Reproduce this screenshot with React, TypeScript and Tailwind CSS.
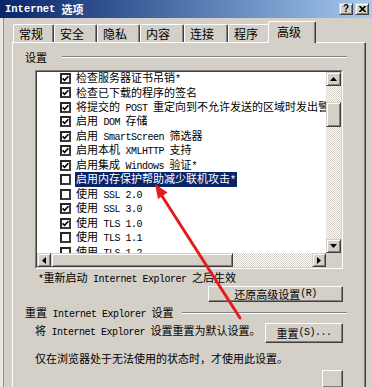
import React from "react";

function Txt({ s }: { s: string }) {
  const parts = s.match(/[\x00-\x7F]+|[^\x00-\x7F]+/g) || [];
  return (
    <>
      {parts.map((p, i) =>
        /^[\x00-\x7F]+$/.test(p) ? (
          <span
            key={i}
            className="font-['Liberation_Mono',monospace] text-[10px] tracking-[-0.5px] whitespace-pre"
          >
            {p}
          </span>
        ) : (
          <span key={i}>{p}</span>
        )
      )}
    </>
  );
}

function Arrow({ dir }: { dir: "up" | "down" | "left" | "right" }) {
  if (dir === "up")
    return (
      <svg width="7" height="4" viewBox="0 0 7 4">
        <polygon points="0,4 7,4 3.5,0" fill="#000" />
      </svg>
    );
  if (dir === "down")
    return (
      <svg width="7" height="4" viewBox="0 0 7 4">
        <polygon points="0,0 7,0 3.5,4" fill="#000" />
      </svg>
    );
  if (dir === "left")
    return (
      <svg width="4" height="7" viewBox="0 0 4 7">
        <polygon points="4,0 4,7 0,3.5" fill="#000" />
      </svg>
    );
  return (
    <svg width="4" height="7" viewBox="0 0 4 7">
      <polygon points="0,0 0,7 4,3.5" fill="#000" />
    </svg>
  );
}

const raised =
  "bg-[#d4d0c8] border border-t-[#d4d0c8] border-l-[#d4d0c8] border-r-[#404040] border-b-[#404040] shadow-[inset_1px_1px_0_#ffffff,inset_-1px_-1px_0_#808080]";

const btn =
  "bg-[#d4d0c8] border border-t-white border-l-white border-r-[#404040] border-b-[#404040] shadow-[inset_-1px_-1px_0_#808080]";

function CheckBox({ checked }: { checked: boolean }) {
  return (
    <div className="w-[11px] h-[11px] shrink-0 bg-white border-2 border-t-[#262626] border-l-[#262626] border-r-[#3a3a3a] border-b-[#3a3a3a] flex items-center justify-center">
      {checked && (
        <svg width="7" height="7" viewBox="0 0 7 7">
          <path d="M0.6 3.4 L2.6 5.4 L6.4 1.2" stroke="#000" strokeWidth="1.6" fill="none" />
        </svg>
      )}
    </div>
  );
}

const rows: { c: boolean; t: string; sel?: boolean }[] = [
  { c: true, t: "检查服务器证书吊销*" },
  { c: true, t: "检查已下载的程序的签名" },
  { c: true, t: "将提交的 POST 重定向到不允许发送的区域时发出警告" },
  { c: true, t: "启用 DOM 存储" },
  { c: true, t: "启用 SmartScreen 筛选器" },
  { c: true, t: "启用本机 XMLHTTP 支持" },
  { c: true, t: "启用集成 Windows 验证*" },
  { c: false, t: "启用内存保护帮助减少联机攻击*", sel: true },
  { c: false, t: "使用 SSL 2.0" },
  { c: true, t: "使用 SSL 3.0" },
  { c: true, t: "使用 TLS 1.0" },
  { c: false, t: "使用 TLS 1.1" },
  { c: false, t: "使用 TLS 1.2" },
];

const tabs = [
  { t: "常规", w: "w-[41px]" },
  { t: "安全", w: "w-[43px]" },
  { t: "隐私", w: "w-[43px]" },
  { t: "内容", w: "w-[44px]" },
  { t: "连接", w: "w-[44px]" },
  { t: "程序", w: "w-[42px]" },
];

export default function App() {
  return (
    <div className="w-[372px] h-[387px] overflow-hidden bg-[#d4d0c8] relative font-['Noto_Sans_CJK_SC',sans-serif] text-[11px] text-black">
      {/* Title bar */}
      <div className="h-[18px] flex items-center bg-linear-to-r from-[#0a246a] to-[#a6caf0] pl-[5px] pr-[3px]">
        <div className="text-white font-bold text-[11px] leading-none flex items-center">
          <span className="font-['Liberation_Mono',monospace] text-[10.5px]">Internet</span>
          <span className="ml-[6px]">选项</span>
        </div>
        <div className="ml-auto flex gap-[2px]">
          <div className={`w-[14px] h-[12px] ${raised} flex items-center justify-center text-[10px] font-bold leading-none font-['Liberation_Sans',sans-serif]`}>
            ?
          </div>
          <div className={`w-[14px] h-[12px] ${raised} flex items-center justify-center`}>
            <svg width="7" height="6" viewBox="0 0 7 6">
              <path d="M0.5 0 L6.5 6 M6.5 0 L0.5 6" stroke="#000" strokeWidth="1.6" />
            </svg>
          </div>
        </div>
      </div>

      {/* Body */}
      <div className="flex flex-col pl-[12px] h-[369px] shadow-[inset_3px_0_0_#e8e6e2,inset_4px_0_0_#8e8e8e]">
        {/* Tabs */}
        <div className="flex items-end h-[22px] mt-[3px] ml-[1px]">
          {tabs.map((tb) => (
            <div
              key={tb.t}
              className={`${tb.w} h-[18px] mb-[1px] border-t border-l border-t-white border-l-white border-r border-r-[#404040] rounded-t-[2px] shadow-[inset_-1px_0_0_#808080] pl-[5px] pt-[1px] text-[12px] leading-[16px]`}
            >
              {tb.t}
            </div>
          ))}
          <div className="relative z-10 -ml-[2px] w-[48px] h-[22px] bg-[#d4d0c8] border-t border-l border-t-white border-l-white border-r border-r-[#404040] rounded-t-[2px] shadow-[inset_-1px_0_0_#808080] pl-[8px] pt-[2px] text-[12px] leading-[16px]">
            高级
          </div>
        </div>

        {/* Panel */}
        <div className="-mt-[1px] w-[354px] h-[346px] border-t border-l border-t-white border-l-white border-r border-r-[#404040] shadow-[inset_-1px_0_0_#808080] flex flex-col">
          {/* group header 1 */}
          <div className="mt-[7px] h-[14px] flex items-center pl-[12px]">
            <span className="leading-[14px]">设置</span>
            <div className="flex-1 ml-[15px] mr-[18px] h-[2px] border-t border-t-[#808080] border-b border-b-white" />
          </div>

          {/* list box */}
          <div className="ml-[22px] mt-[6px] w-[308px] h-[199px] border border-t-[#808080] border-l-[#808080] border-r-white border-b-white">
            <div className="w-full h-full border border-t-[#404040] border-l-[#404040] border-r-[#d4d0c8] border-b-[#d4d0c8] bg-white grid grid-cols-[1fr_15px] grid-rows-[1fr_14px]">
              {/* content */}
              <div className="overflow-hidden">
                <div className="-mt-[1px]">
                  {rows.map((r, i) => (
                    <div key={i} className="h-[14.5px] flex items-center pl-[23px] whitespace-nowrap">
                      <CheckBox checked={r.c} />
                      <span
                        className={`ml-[4px] leading-[13px] px-[1px] ${
                          r.sel ? "bg-[#0a246a] text-white" : ""
                        }`}
                      >
                        <Txt s={r.t} />
                      </span>
                    </div>
                  ))}
                </div>
              </div>
              {/* vertical scrollbar */}
              <div className="flex flex-col bg-[repeating-conic-gradient(#ffffff_0%_25%,#d4d0c8_0%_50%)] bg-[length:2px_2px]">
                <div className={`h-[14px] ${raised} flex items-center justify-center`}>
                  <Arrow dir="up" />
                </div>
                <div className={`mt-[16px] h-[25px] ${raised}`} />
                <div className={`mt-auto h-[14px] ${raised} flex items-center justify-center`}>
                  <Arrow dir="down" />
                </div>
              </div>
              {/* horizontal scrollbar */}
              <div className="flex bg-[repeating-conic-gradient(#ffffff_0%_25%,#d4d0c8_0%_50%)] bg-[length:2px_2px]">
                <div className={`w-[14px] ${raised} flex items-center justify-center`}>
                  <Arrow dir="left" />
                </div>
                <div className={`w-[182px] ${raised}`} />
                <div className={`ml-auto w-[14px] ${raised} flex items-center justify-center`}>
                  <Arrow dir="right" />
                </div>
              </div>
              <div className="bg-[#d4d0c8]" />
            </div>
          </div>

          {/* note */}
          <div className="mt-[1px] h-[14px] leading-[14px] pl-[25px] whitespace-nowrap">
            <Txt s="*重新启动 Internet Explorer 之后生效" />
          </div>

          {/* restore button */}
          <div className={`mt-[2px] ml-auto mr-[22px] w-[135px] h-[18px] ${btn} flex items-center justify-center leading-[14px]`}>
            <Txt s="还原高级设置(R)" />
          </div>

          {/* group header 2 */}
          <div className="mt-[4px] h-[14px] flex items-center pl-[12px]">
            <span className="leading-[14px] whitespace-nowrap">
              <Txt s="重置 Internet Explorer 设置" />
            </span>
            <div className="flex-1 ml-[8px] mr-[18px] h-[2px] border-t border-t-[#808080] border-b border-b-white" />
          </div>

          {/* reset row */}
          <div className="mt-[3px] flex items-start">
            <div className="ml-[22px] h-[14px] leading-[14px] whitespace-nowrap">
              <Txt s="将 Internet Explorer 设置重置为默认设置。" />
            </div>
            <div className={`ml-auto mr-[22px] w-[78px] h-[20px] ${btn} flex items-center justify-center leading-[14px]`}>
              <Txt s="重置(S)..." />
            </div>
          </div>

          <div className="mt-[8px] ml-[22px] h-[14px] leading-[14px] whitespace-nowrap">
            仅在浏览器处于无法使用的状态时，才使用此设置。
          </div>

          <div className={`mt-[5px] ml-auto mr-[22px] w-[21px] h-[20px] ${btn}`} />
        </div>
      </div>

      {/* red annotation arrow */}
      <svg className="absolute left-0 top-0 pointer-events-none" width="372" height="387" viewBox="0 0 372 387">
        <line x1="240" y1="318" x2="162" y2="196" stroke="#e21d1d" strokeWidth="3" strokeLinecap="round" />
        <polygon points="155,184 167.5,192.5 158,199" fill="#e21d1d" />
      </svg>
    </div>
  );
}
